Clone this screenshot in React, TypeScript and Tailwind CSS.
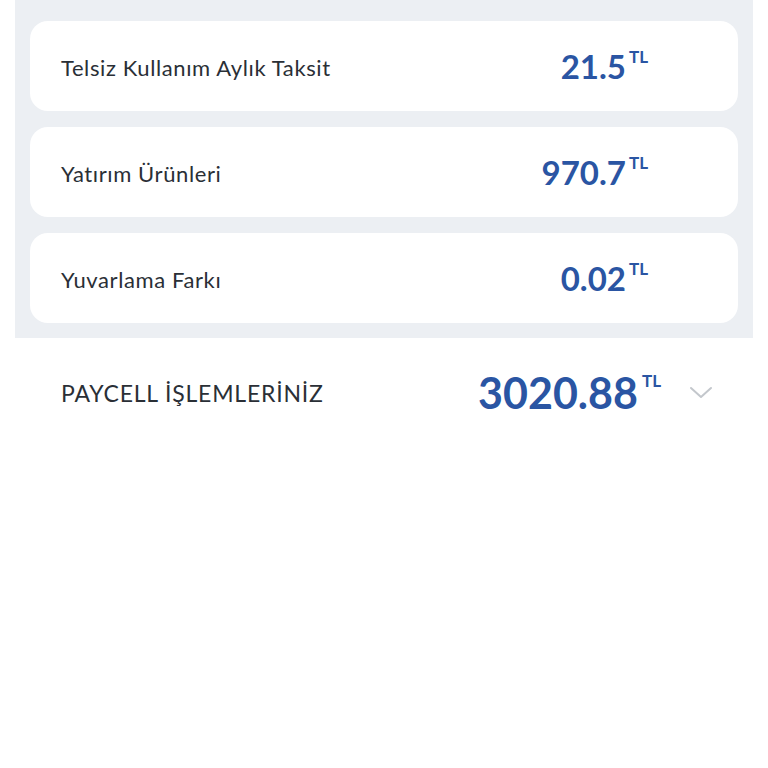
import React from "react";

const rows = [
  { label: "Telsiz Kullanım Aylık Taksit", value: "21.5" },
  { label: "Yatırım Ürünleri", value: "970.7" },
  { label: "Yuvarlama Farkı", value: "0.02" },
];

export default function App() {
  return (
    <div className="w-[768px] h-[768px] bg-white" style={{ fontFamily: "Lato, 'Noto Sans', sans-serif" }}>
      <div className="mx-[15px] w-[738px] bg-[#eceff3] px-[15px] pt-[21px] pb-[15px] flex flex-col gap-[16px]">
        {rows.map((r) => (
          <div key={r.label} className="h-[90px] bg-white rounded-[18px] flex items-center pl-[31px] pr-[90px]">
            <span className="flex-1 text-[22px] text-[#2a2f36] tracking-[0.6px] mt-[2px]">{r.label}</span>
            <span className="flex items-start text-[#2a55a3] font-bold">
              <span className="text-[33px] leading-[36px]">{r.value}</span>
              <span className="text-[17px] leading-[17px] ml-[3px] mt-[0px]">TL</span>
            </span>
          </div>
        ))}
      </div>
      <div className="mx-[15px] w-[738px] h-[110px] flex items-center pl-[46px] pr-[40px]">
        <span className="flex-1 text-[23px] text-[#2a2f36] tracking-[0.8px]">PAYCELL İŞLEMLERİNİZ</span>
        <span className="flex items-start text-[#2a55a3] font-bold">
          <span className="text-[43px] leading-[46px]">3020.88</span>
          <span className="text-[17px] leading-[17px] ml-[4px] mt-[2px]">TL</span>
        </span>
        <svg width="24" height="14" viewBox="0 0 24 14" className="ml-[28px]">
          <path d="M2 2 L12 11 L22 2" fill="none" stroke="#c3c7cc" strokeWidth="2" strokeLinecap="round" strokeLinejoin="round" />
        </svg>
      </div>
    </div>
  );
}
